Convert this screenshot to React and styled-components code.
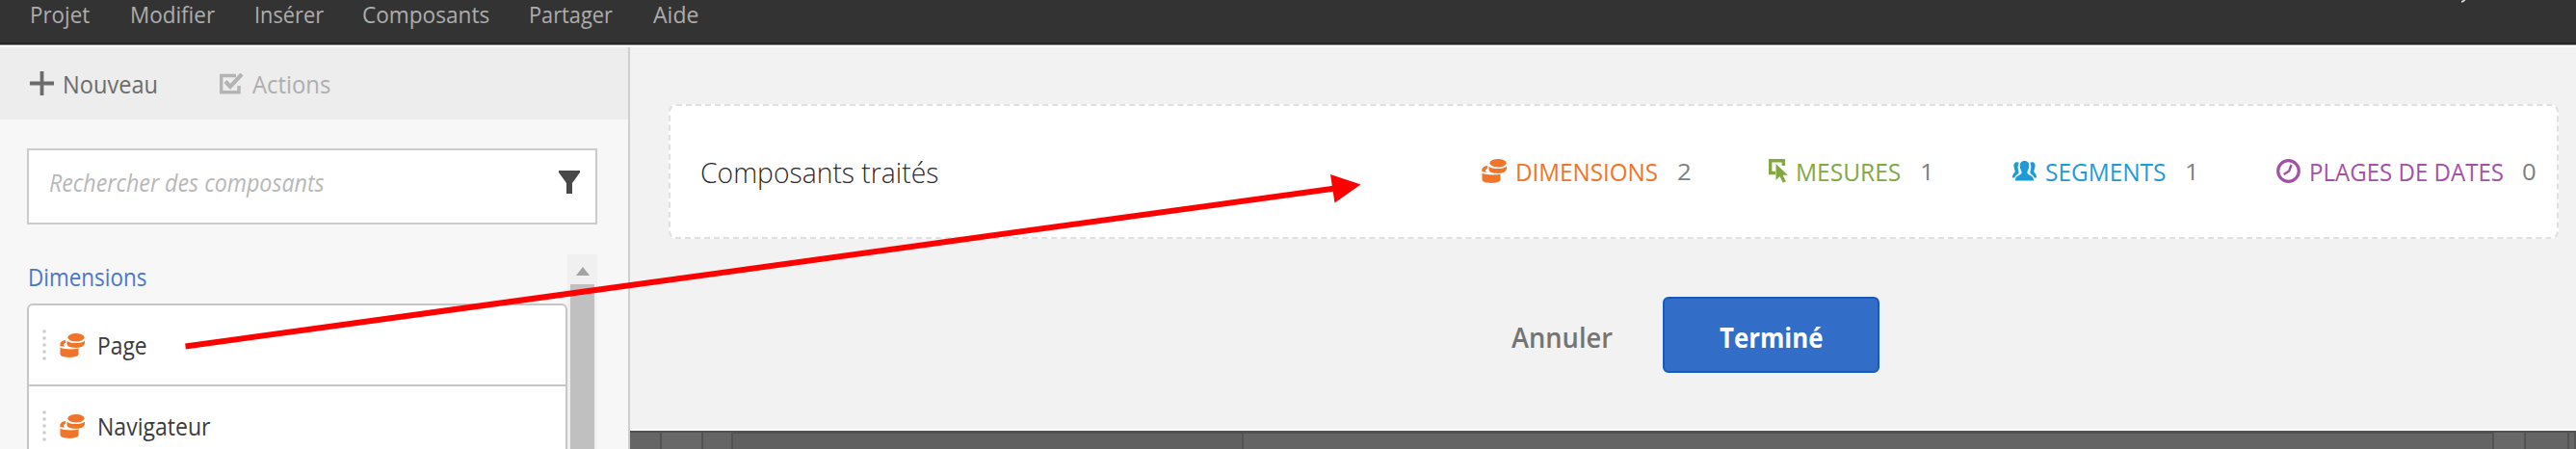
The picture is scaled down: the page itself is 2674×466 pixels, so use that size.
import React, { useLayoutEffect, useRef, useState } from "react";
import styled, { createGlobalStyle } from "styled-components";

const GlobalStyle = createGlobalStyle`
  * { box-sizing: border-box; }
  body { margin: 0; font-family: "Open Sans", "Noto Sans", sans-serif; overflow: hidden; }
  svg { display: block; flex: none; }
`;

const Page = styled.div`
  position: relative;
  display: flex;
  flex-direction: column;
  width: 2674px;
  height: 466px;
  overflow: hidden;
  background: #f2f2f2;
`;

const LabelBox = styled.span`
  display: block;
  flex: none;
  width: ${(p) => p.$width}px;
  margin-left: ${(p) => p.$gap || 0}px;
  color: ${(p) => p.$color || "inherit"};
  font-size: ${(p) => p.$size || 25}px;
  font-weight: ${(p) => p.$weight || 400};
  font-style: ${(p) => (p.$italic ? "italic" : "normal")};
  line-height: ${(p) => p.$line || 34}px;
  white-space: nowrap;
`;

const LabelText = styled.span`
  display: inline-block;
  vertical-align: top;
  transform-origin: 0 50%;
`;

/* Condenses its text so that it fills the given width exactly. */
function Label({ width, gap, color, size, weight, italic, line, children }) {
  const ref = useRef(null);
  const [scale, setScale] = useState(1);
  useLayoutEffect(() => {
    setScale(width / ref.current.offsetWidth);
  }, [width]);
  return (
    <LabelBox $width={width} $gap={gap} $color={color} $size={size} $weight={weight} $italic={italic} $line={line}>
      <LabelText ref={ref} style={{ transform: `scaleX(${scale})` }}>{children}</LabelText>
    </LabelBox>
  );
}

const Header = styled.header`
  flex: none;
  height: 49px;
  background: #333;
  border-bottom: 2px solid #fff;
  box-shadow: inset 0 -1px 0 #777, inset 0 -3px 0 #282828;
  display: flex;
  justify-content: space-between;
  align-items: flex-start;
`;

const Menu = styled.nav`
  display: flex;
  align-items: center;
  height: 30px;
  padding-left: 31px;
  color: #adadad;
`;

const HeaderMark = styled.svg`
  margin-right: 114px;
`;

const Body = styled.div`
  flex: 1;
  display: flex;
  min-height: 0;
`;

const Sidebar = styled.aside`
  flex: none;
  width: 654px;
  background: #f7f7f7;
  border-right: 2px solid #cfcfcf;
  display: flex;
  flex-direction: column;
`;

const Toolbar = styled.div`
  flex: none;
  display: flex;
  align-items: center;
  height: 75px;
  padding: 0 0 0 31px;
  background: #ededed;
`;

const ActionIcon = styled.svg`
  margin-left: 64px;
`;

const SearchField = styled.div`
  flex: none;
  display: flex;
  align-items: center;
  justify-content: space-between;
  width: 592px;
  height: 79px;
  margin: 30px 0 0 28px;
  padding: 0 16px 9px 21px;
  background: #fff;
  border: 2px solid #cbcbcb;
`;

const ListArea = styled.div`
  flex: 1;
  display: flex;
  margin: 31px 0 0 28px;
  min-height: 0;
`;

const ListColumn = styled.div`
  width: 561px;
  padding-top: 6px;
`;

const List = styled.div`
  margin-top: 11px;
  background: #fff;
  border: 2px solid #c6c6c6;
  border-radius: 6px 6px 0 0;
`;

const ListRow = styled.div`
  display: flex;
  align-items: center;
  height: 84px;
  padding-left: 14px;
  border-bottom: 2px solid #c6c6c6;
`;

const DragHandle = styled.svg`
  margin-right: 14px;
`;

const Scrollbar = styled.div`
  width: 31px;
  padding: 13px 3px 0;
  background: #f0f0f0;
  display: flex;
  flex-direction: column;
  align-items: center;
`;

const ScrollThumb = styled.div`
  flex: 1;
  width: 25px;
  margin-top: 9px;
  background: #c0c0c0;
`;

const Main = styled.main`
  flex: 1;
  display: flex;
  flex-direction: column;
`;

const DropZone = styled.section`
  flex: none;
  display: flex;
  align-items: center;
  justify-content: space-between;
  height: 140px;
  margin: 59px 18px 0 40px;
  padding: 1px 21px 0 31px;
  background: #fff;
  border: 2px dashed #e0e0e0;
  border-radius: 8px;
`;

const Counters = styled.div`
  display: flex;
  align-items: center;
`;

const Counter = styled.div`
  display: flex;
  align-items: center;
  margin-left: ${(p) => p.$gap}px;
  padding-bottom: 2px;
  color: ${(p) => p.$color};
`;

const Buttons = styled.div`
  flex: none;
  display: flex;
  align-items: center;
  margin: 60px 0 0 915px;
`;

const CancelButton = styled.div`
  padding-top: 4px;
  color: #747474;
`;

const DoneButton = styled.div`
  display: flex;
  justify-content: center;
  align-items: center;
  width: 225px;
  height: 79px;
  margin-left: 52px;
  padding-top: 4px;
  background: #326dc8;
  border: 2px solid #1659c0;
  border-radius: 6px;
  color: #fff;
`;

const Canvas = styled.div`
  display: flex;
  flex: 1;
  margin-top: 58px;
  border-top: 2px solid #fff;
  background: #646464;
`;

const Cell = styled.div`
  flex: ${(p) => (p.$width ? `0 0 ${p.$width}px` : "1")};
  background: ${(p) => p.$tone || "#656565"};
  border-top: ${(p) => (p.$inner ? 3 : 2)}px solid #505050;
  border-right: 2px solid #535353;
`;

const Arrow = styled.svg`
  position: absolute;
  left: 0;
  top: 0;
  pointer-events: none;
`;

const DimensionIcon = () => (
  <svg width="26" height="25" viewBox="0 0 26 25" fill="#f07429">
    <ellipse cx="17" cy="4.200" rx="8.600" ry="4.200" />
    <path d="M7.500 7.800c3 3 15 3.200 18.500-.3v2.700c-1 4-6 5-11 4.600-4-.2-7-1-7.500-3.500z" />
    <path d="M6.200 7C1.500 7.500-.2 10 .4 13.300l4.800.5C3.400 12 3.800 10.500 6.200 10z" />
    <path d="M.5 14.700c4 2 14.500 2.200 19 .8v6.300c-1 4.200-18 4.200-19 0z" />
  </svg>
);

const MetricIcon = () => (
  <svg width="20" height="25" viewBox="0 0 20 25">
    <path d="M7 14.500H1.700V1.700h13.600V7" fill="none" stroke="#83a840" strokeWidth="3.400" />
    <path d="M7.500 5v17l4-4 3.300 6.700 3-1.500-3.200-6.400h5.200z" fill="#83a840" />
  </svg>
);

const SegmentIcon = () => (
  <svg width="25" height="21" viewBox="0 0 25 21" fill="#1d9bd7">
    <path d="M12.500 0c3.800 0 5.200 2.500 4.700 6-.2 2.700-1.600 4-1.900 6 .2 3 6.600 3 6.600 7v1.500h-18.800V19c0-4 6.400-4 6.600-7-.4-2-1.700-3.300-1.900-6-.4-3.500 1-6 4.700-6z" />
    <path d="M6.800 1.700C3.500 0 .7 2.500 1.500 6c.5 3 1.600 4 1 5.500C2 13 0 13 0 17.500h2.300c1-3.300 4.200-3.500 4.400-5.300C6 9 4.800 6 6.800 1.700zM18.200 1.700c3.300-1.700 6.100.8 5.300 4.300-.5 3-1.600 4-1 5.500.5 1.500 2.500 1.500 2.500 6h-2.300c-1-3.300-4.200-3.500-4.400-5.300.7-3.200 1.900-6.200-.1-10.500z" />
  </svg>
);

const DateIcon = () => (
  <svg width="25" height="25" viewBox="0 0 25 25" fill="none" stroke="#a550a7">
    <circle cx="12.500" cy="12.500" r="10.800" strokeWidth="3.200" />
    <path d="M15.500 6l-2.300 6.500-5.500 3.500" strokeWidth="2.400" />
  </svg>
);

const menu = [
  ["Projet", 62, 0], ["Modifier", 88, 42], ["Insérer", 72, 41],
  ["Composants", 132, 40], ["Partager", 87, 41], ["Aide", 47, 42],
];

const rows = [["Page", 52], ["Navigateur", 117]];

const counters = [
  { name: "DIMENSIONS", width: 148, count: "2", gap: 0, inner: 9, countGap: 20, Icon: DimensionIcon, color: "#f07429" },
  { name: "MESURES", width: 109, count: "1", gap: 80, inner: 8, countGap: 20, Icon: MetricIcon, color: "#83a840" },
  { name: "SEGMENTS", width: 125, count: "1", gap: 81, inner: 9, countGap: 20, Icon: SegmentIcon, color: "#1d9bd7" },
  { name: "PLAGES DE DATES", width: 202, count: "0", gap: 80, inner: 9, countGap: 19, Icon: DateIcon, color: "#a550a7" },
];

export default function App() {
  return (
    <Page>
      <GlobalStyle />
      <Header>
        <Menu>
          {menu.map(([name, width, gap]) => (
            <Label key={name} width={width} gap={gap} size={24.5} line={26}>{name}</Label>
          ))}
        </Menu>
        <HeaderMark width="5" height="3"><path d="M0 2.700Q2.500 2.500 4.500 0H2Q1 1 0 1z" fill="#ddd" /></HeaderMark>
      </Header>
      <Body>
        <Sidebar>
          <Toolbar>
            <svg width="25" height="25"><path d="M12.500 0v25M0 12.500h25" stroke="#6b6b6b" strokeWidth="3.800" /></svg>
            <Label width={99} gap={9} color="#6c6c6c">Nouveau</Label>
            <ActionIcon width="25" height="22" viewBox="0 0 25 22" fill="none" stroke="#b4b4b4">
              <path d="M17 2.500H1.700v17.300H20V13" strokeWidth="3.400" />
              <path d="M6 8.500l5 5.500L23 1" strokeWidth="4.200" />
            </ActionIcon>
            <Label width={81} gap={9} color="#aeaeae">Actions</Label>
          </Toolbar>
          <SearchField>
            <Label width={286} color="#b8b8b8" weight={500} italic>Rechercher des composants</Label>
            <svg width="22" height="24"><path d="M0 0h22v2l-8 11v11H8V13L0 2z" fill="#484848" /></svg>
          </SearchField>
          <ListArea>
            <ListColumn>
              <Label width={123} gap={1} color="#4a76cb">Dimensions</Label>
              <List>
                {rows.map(([name, width]) => (
                  <ListRow key={name}>
                    <DragHandle width="4" height="32" fill="#c9c9c9">
                      {[0, 7, 14, 21, 28].map((y) => <rect key={y} x="0.500" y={y + 0.500} width="3" height="3" />)}
                    </DragHandle>
                    <DimensionIcon />
                    <Label width={width} gap={13} color="#3c3c3c">{name}</Label>
                  </ListRow>
                ))}
              </List>
            </ListColumn>
            <Scrollbar>
              <svg width="14" height="9"><path d="M7 0l7 9H0z" fill="#a2a2a2" /></svg>
              <ScrollThumb />
            </Scrollbar>
          </ListArea>
        </Sidebar>
        <Main>
          <DropZone>
            <Label width={247} size={30} weight={300} color="#2c2c2c">Composants traités</Label>
            <Counters>
              {counters.map(({ name, width, count, gap, inner, countGap, Icon, color }) => (
                <Counter key={name} $gap={gap} $color={color}>
                  <Icon />
                  <Label width={width} gap={inner}>{name}</Label>
                  <Label width={15} gap={countGap} size={24} color="#808080">{count}</Label>
                </Counter>
              ))}
            </Counters>
          </DropZone>
          <Buttons>
            <CancelButton><Label width={105} size={28} weight={600}>Annuler</Label></CancelButton>
            <DoneButton><Label width={107} size={28} weight={700}>Terminé</Label></DoneButton>
          </Buttons>
          <Canvas>
            <Cell $width={33} />
            <Cell $width={43} $tone="#686868" />
            <Cell $width={31} />
            <Cell $width={530} $tone="#606060" $inner />
            <Cell $tone="#646464" $inner />
            <Cell $width={33} $tone="#686868" />
            <Cell $width={45} />
            <Cell $width={7} />
          </Canvas>
        </Main>
      </Body>
      <Arrow width="2674" height="466">
        <path d="M192.500 359.500L1386 195.500" stroke="#f00" strokeWidth="6" />
        <path d="M1381 181l31.500 10.500-27 19z" fill="#f00" />
      </Arrow>
    </Page>
  );
}
